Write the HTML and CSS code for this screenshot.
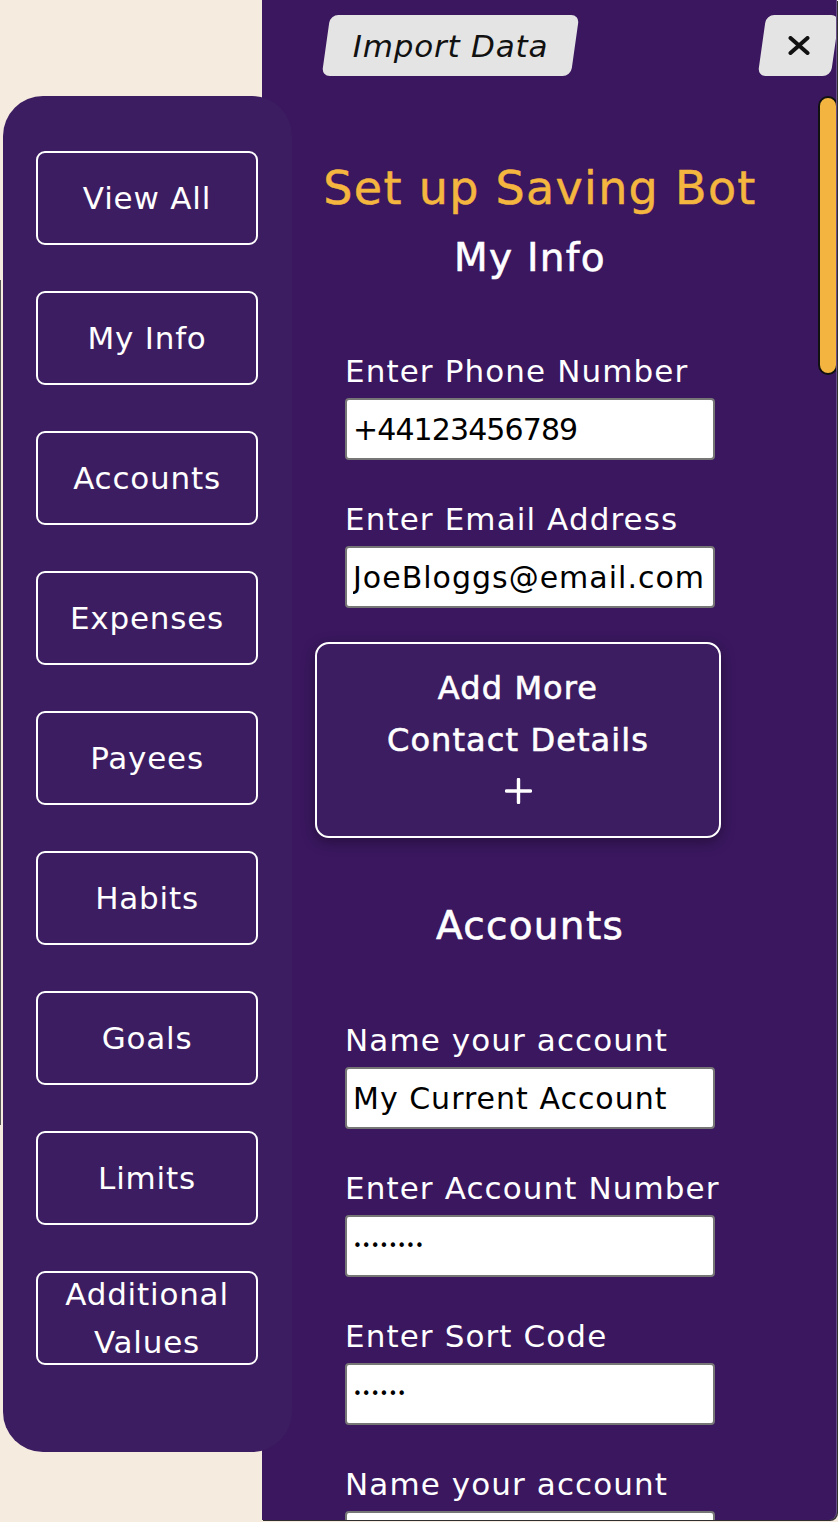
FILE: index.html
```html
<!DOCTYPE html>
<html lang="en">
<head>
<meta charset="utf-8">
<title>Set up Saving Bot</title>
<link rel="stylesheet" href="styles.css">
</head>
<body>
<aside class="sidebar">
  <button class="nav-btn">View All</button>
  <button class="nav-btn">My Info</button>
  <button class="nav-btn">Accounts</button>
  <button class="nav-btn">Expenses</button>
  <button class="nav-btn">Payees</button>
  <button class="nav-btn">Habits</button>
  <button class="nav-btn">Goals</button>
  <button class="nav-btn">Limits</button>
  <button class="nav-btn">Additional<br>Values</button>
</aside>
<main class="panel">
  <div class="topbar">
    <button class="import">Import Data</button>
    <button class="close" aria-label="Close">
      <svg width="22" height="19" viewBox="0 0 22 19"><path d="M2.5 2 L19.5 17 M19.5 2 L2.5 17" stroke="#111" stroke-width="4" stroke-linecap="round"/></svg>
    </button>
  </div>
  <div class="thumb"></div>
  <h1 class="title">Set up Saving Bot</h1>
  <section class="section">
    <h2 class="heading">My Info</h2>
    <div class="field">
      <label>Enter Phone Number</label>
      <input type="tel" value="+44123456789">
    </div>
    <div class="field">
      <label>Enter Email Address</label>
      <input type="text" value="JoeBloggs@email.com">
    </div>
    <button class="add">Add More<br>Contact Details
      <svg class="plus" width="27" height="26" viewBox="0 0 27 26"><path d="M13.5 1.5 V24.5 M1.5 13 H25.5" stroke="#fff" stroke-width="3.4" stroke-linecap="round"/></svg>
    </button>
  </section>
  <section class="section accounts">
    <h2 class="heading">Accounts</h2>
    <div class="field">
      <label>Name your account</label>
      <input type="text" value="My Current Account">
    </div>
    <div class="field">
      <label>Enter Account Number</label>
      <input type="password" class="secret" value="12345678">
    </div>
    <div class="field">
      <label>Enter Sort Code</label>
      <input type="password" class="secret" value="123456">
    </div>
    <div class="field">
      <label>Name your account</label>
      <input type="text" value="">
    </div>
  </section>
</main>
</body>
</html>
```
FILE: styles.css
```css
html, body {
  margin: 0;
}
body {
  background: #f5ebdf;
  font-family: "DejaVu Sans", sans-serif;
  width: 838px;
  height: 1522px;
  overflow: hidden;
  position: relative;
}
body::before {
  content: "";
  position: absolute;
  left: 0;
  top: 280px;
  width: 1px;
  height: 845px;
  background: #555;
}
button {
  font-family: inherit;
  border: none;
  background: none;
  padding: 0;
  margin: 0;
  cursor: pointer;
}

/* Sidebar */
.sidebar {
  position: absolute;
  left: 3px;
  top: 96px;
  width: 289px;
  height: 1356px;
  box-sizing: border-box;
  background: #3d1d61;
  border-radius: 40px;
  padding: 55px 0 0 33px;
  display: flex;
  flex-direction: column;
  gap: 46px;
  z-index: 2;
}
.nav-btn {
  width: 222px;
  height: 94px;
  box-sizing: border-box;
  border: 2px solid #fff;
  border-radius: 9px;
  color: #fff;
  font-size: 31px;
  line-height: 48px;
  letter-spacing: 0.8px;
  display: flex;
  align-items: center;
  justify-content: center;
  text-align: center;
}

/* Panel */
.panel {
  margin-left: 262px;
  width: 574px;
  height: 1520px;
  background: #3a175f;
  border-right: 1px solid #6a4f8a;
  border-bottom-right-radius: 8px;
  box-shadow: 1px 1px 0 #2f2f2f;
  position: relative;
  overflow: hidden;
}
.topbar {
  display: flex;
  align-items: flex-start;
  padding: 15px 0 0 64px;
  height: 61px;
}
.import {
  position: relative;
  isolation: isolate;
  width: 249px;
  height: 61px;
  font-size: 31px;
  font-style: italic;
  letter-spacing: 0.8px;
  color: #111;
}
.import::before,
.close::before {
  content: "";
  position: absolute;
  inset: 0;
  background: #e4e4e4;
  border-radius: 8px;
  transform: skewX(-8deg);
  z-index: -1;
}
.close {
  position: relative;
  isolation: isolate;
  margin-left: auto;
  margin-right: 1px;
  width: 73px;
  height: 61px;
  display: flex;
  align-items: center;
  justify-content: center;
  padding-bottom: 1px;
}
.close svg {
  display: block;
}
.thumb {
  position: absolute;
  left: 556px;
  top: 96px;
  width: 20px;
  height: 279px;
  box-sizing: border-box;
  background: #f3b53f;
  border: 2px solid #111;
  border-radius: 10px;
}
.title {
  margin: 84px 0 0;
  width: 556px;
  text-align: center;
  font-size: 46px;
  line-height: 56px;
  font-weight: normal;
  letter-spacing: 1.3px;
  color: #f4b63f;
  -webkit-text-stroke: 0.5px #f4b63f;
}
.section {
  width: 370px;
  margin-left: 83px;
}
.heading {
  margin: 18px 0 71px;
  text-align: center;
  font-size: 39px;
  line-height: 48px;
  font-weight: normal;
  letter-spacing: 1.3px;
  color: #fff;
  -webkit-text-stroke: 0.6px #fff;
}
.accounts .heading {
  margin-top: 64px;
  margin-bottom: 72px;
}
.field + .field {
  margin-top: 41px;
}
.field label {
  display: block;
  font-size: 31px;
  line-height: 36px;
  letter-spacing: 1.1px;
  color: #fff;
  white-space: nowrap;
}
.field input {
  display: block;
  margin-top: 9px;
  width: 370px;
  height: 62px;
  box-sizing: border-box;
  border: 2px solid #767676;
  border-radius: 4px;
  padding: 0 6px;
  font-family: "DejaVu Sans", sans-serif;
  font-size: 30px;
  letter-spacing: 1px;
  color: #000;
  background: #fff;
  outline: none;
}
.field input[type="tel"] {
  letter-spacing: -0.9px;
}
.field input.secret {
  font-size: 15px;
  letter-spacing: 0;
}
.add {
  display: block;
  margin: 34px 0 0 -30px;
  width: 406px;
  box-sizing: border-box;
  padding: 18px 0 32px;
  border: 2px solid #fff;
  border-radius: 14px;
  background: #3d1d61;
  color: #fff;
  font-size: 32px;
  line-height: 52px;
  letter-spacing: 1.1px;
  text-align: center;
  -webkit-text-stroke: 0.6px #fff;
  box-shadow: 0 4px 14px rgba(0, 0, 0, 0.35);
}
.plus {
  display: block;
  margin: 12px auto 0;
}
```
